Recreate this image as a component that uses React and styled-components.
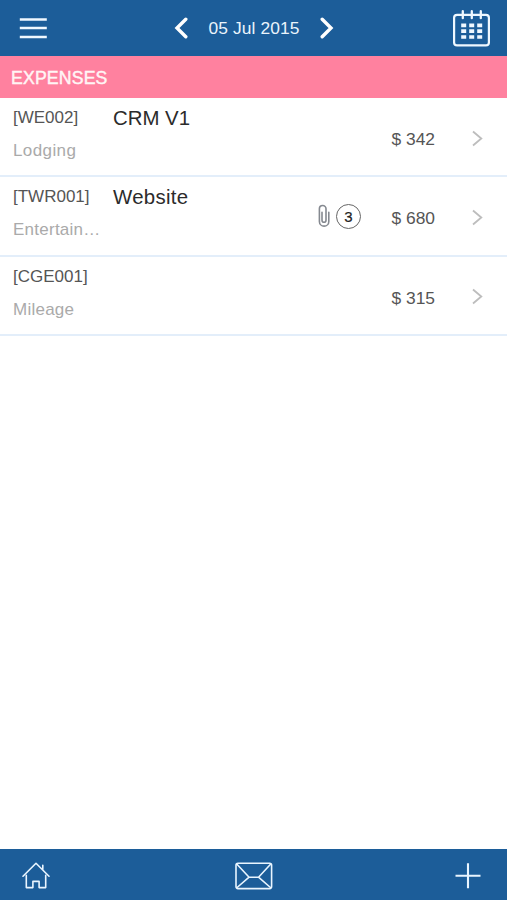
import React from "react";
import styled, { createGlobalStyle } from "styled-components";

const GlobalStyle = createGlobalStyle`
  *, *::before, *::after { box-sizing: border-box; }
  body {
    margin: 0;
    background: #fff;
    font-family: "Liberation Sans", Arial, sans-serif;
  }
  button {
    border: 0;
    padding: 0;
    background: none;
    font: inherit;
    color: inherit;
  }
  svg { display: block; }
`;

const Screen = styled.div`
  display: flex;
  flex-direction: column;
  width: 100%;
  height: 100vh;
  overflow: hidden;
`;

const Header = styled.header`
  display: grid;
  grid-template-columns: 1fr auto 1fr;
  align-items: center;
  height: 56px;
  padding: 0 16px 0 19px;
  background: #1c5d99;
  color: #fff;
`;

const IconButton = styled.button`
  display: flex;
  justify-self: ${(p) => p.$align || "center"};
`;

const DateNav = styled.div`
  display: flex;
  align-items: center;
  justify-content: space-between;
  width: 160px;
  margin-right: 2px;
`;

const DateLabel = styled.span`
  font-size: 17.4px;
  line-height: 20px;
  letter-spacing: 0.1px;
  color: #eaf4fc;
  white-space: nowrap;
`;

const SectionTitle = styled.h1`
  height: 42px;
  margin: 0;
  padding-left: 11px;
  background: #ff819f;
  color: #fff5f5;
  font-size: 17.7px;
  font-weight: 400;
  line-height: 44px;
  letter-spacing: 0.15px;
  -webkit-text-stroke: 0.45px currentColor;
`;

const List = styled.ul`
  flex: 1;
  margin: 0;
  padding: 0;
  list-style: none;
`;

const Row = styled.li`
  display: grid;
  grid-template-columns: 100px 1fr auto 74px 60px;
  height: 79.3px;
  padding: 0 12px 0 13px;
  border-bottom: 2px solid #e3eefa;
`;

const Labels = styled.div`
  display: flex;
  flex-direction: column;
  gap: 13px;
  padding-top: 10px;
`;

const Code = styled.span`
  color: #555;
  font-size: 17px;
  line-height: 20px;
`;

const Category = styled.span`
  width: 90px;
  overflow: hidden;
  color: #aaa;
  font-size: 17px;
  line-height: 20px;
  letter-spacing: ${(p) => p.$tracking || 0}px;
  white-space: nowrap;
`;

const Project = styled.span`
  padding-top: 8px;
  color: #2b2b2b;
  font-size: 20.4px;
  line-height: 24px;
  letter-spacing: ${(p) => p.$tracking || 0}px;
`;

const Attachments = styled.div`
  display: flex;
  align-items: center;
  gap: 6px;
  padding: 2px 0 0;
`;

const Count = styled.span`
  display: flex;
  align-items: center;
  justify-content: center;
  width: 25px;
  height: 25px;
  border: 1.5px solid #666;
  border-radius: 50%;
  color: #222;
  font-size: 15px;
  line-height: 20px;
  -webkit-text-stroke: 0.2px currentColor;
`;

const Amount = styled.span`
  align-self: center;
  justify-self: end;
  padding-top: 5px;
  color: #555;
  font-size: 17.4px;
  line-height: 20px;
`;

const Disclosure = styled.span`
  align-self: center;
  justify-self: end;
  padding: 4px 11px 0 0;
`;

const Footer = styled.footer`
  display: grid;
  grid-template-columns: 1fr auto 1fr;
  align-items: center;
  height: 51px;
  padding: 2px 26px 0 22px;
  background: #1c5d99;
  color: #e9f5ff;
`;

const MailButton = styled(IconButton)`
  margin-left: 4px;
`;

const MenuIcon = () => (
  <svg width="29" height="24" fill="none" stroke="#f0f8ff" strokeWidth="2.5">
    <path d="M.8 3.6h27M.8 12.1h27M.8 20.9h27" />
  </svg>
);

const NavArrow = ({ d }) => (
  <svg width="14" height="24" fill="none" stroke="#fff" strokeWidth="3.4" strokeLinecap="round">
    <path d={d} />
  </svg>
);

const CalendarIcon = () => (
  <svg width="38" height="40" fill="none" stroke="#eff8ff">
    <rect x="1.1" y="6.8" width="34.8" height="30.6" rx="3" strokeWidth="2.2" />
    <path d="M9.8 3.2v7M18.8 3.2v7M27.8 3.2v7" strokeWidth="2.3" strokeLinecap="round" />
    <path
      d="M8.2 17.3h5M16.2 17.3h5M24.2 17.3h5M8.2 23.2h5M16.2 23.2h5M24.2 23.2h5M8.2 29h5M16.2 29h5M24.2 29h5"
      strokeWidth="3.7"
    />
  </svg>
);

const ClipIcon = () => (
  <svg width="13" height="26" fill="none" stroke="#858990" strokeWidth="1.6" strokeLinecap="round">
    <path d="M9 5.5V4.8a3.3 3.3 0 0 0-6.6 0V17.4a4.7 4.7 0 0 0 9.4 0V8.2M9 5.5v10.7a2 2 0 0 1-4 0V8.2" />
  </svg>
);

const ChevronIcon = () => (
  <svg width="13" height="18" fill="none" stroke="#bdbdbd" strokeWidth="1.8">
    <path d="M2 1.5l8.3 7L2 15.5" />
  </svg>
);

const HomeIcon = () => (
  <svg width="29" height="29" fill="none" stroke="currentColor" strokeWidth="1.6" strokeLinejoin="round" strokeLinecap="round">
    <path d="M1 15.2L14 2.3l13 12.9M20.8 8.8V4.3" />
    <path d="M4.3 14.3v12.3h6.6v-6.2h6.2v6.2h6.6V14.3" />
  </svg>
);

const MailIcon = () => (
  <svg width="38" height="28" fill="none" stroke="currentColor" strokeWidth="1.6">
    <rect x="1" y="1.2" width="35.6" height="25.4" rx="2" />
    <path d="M1.5 1.8l12.6 13.4h9.4L36 1.8M1.5 26l12.6-10.8M36 26L23.5 15.2" />
  </svg>
);

const PlusIcon = () => (
  <svg width="27" height="27" fill="none" stroke="currentColor" strokeWidth="2.1">
    <path d="M14 1.2v25M1.5 13.7h25" />
  </svg>
);

const expenses = [
  { code: "[WE002]", category: "Lodging", categoryTracking: 0.4, project: "CRM V1", amount: "$ 342" },
  { code: "[TWR001]", category: "Entertain…", categoryTracking: 0.25, project: "Website", projectTracking: 0.3, files: 3, amount: "$ 680" },
  { code: "[CGE001]", category: "Mileage", categoryTracking: 0.25, amount: "$ 315" },
];

export default function App() {
  return (
    <Screen>
      <GlobalStyle />
      <Header>
        <IconButton $align="start" aria-label="Menu"><MenuIcon /></IconButton>
        <DateNav>
          <IconButton aria-label="Previous day"><NavArrow d="M11.8 3.2L3 12l8.8 8.8" /></IconButton>
          <DateLabel>05 Jul 2015</DateLabel>
          <IconButton aria-label="Next day"><NavArrow d="M2.2 3.2L11 12l-8.8 8.8" /></IconButton>
        </DateNav>
        <IconButton $align="end" aria-label="Calendar"><CalendarIcon /></IconButton>
      </Header>
      <SectionTitle>EXPENSES</SectionTitle>
      <List>
        {expenses.map((item) => (
          <Row key={item.code}>
            <Labels>
              <Code>{item.code}</Code>
              <Category $tracking={item.categoryTracking}>{item.category}</Category>
            </Labels>
            <Project $tracking={item.projectTracking}>{item.project}</Project>
            <Attachments>
              {item.files && <><ClipIcon /><Count>{item.files}</Count></>}
            </Attachments>
            <Amount>{item.amount}</Amount>
            <Disclosure><ChevronIcon /></Disclosure>
          </Row>
        ))}
      </List>
      <Footer>
        <IconButton $align="start" aria-label="Home"><HomeIcon /></IconButton>
        <MailButton aria-label="Mail"><MailIcon /></MailButton>
        <IconButton $align="end" aria-label="Add expense"><PlusIcon /></IconButton>
      </Footer>
    </Screen>
  );
}
